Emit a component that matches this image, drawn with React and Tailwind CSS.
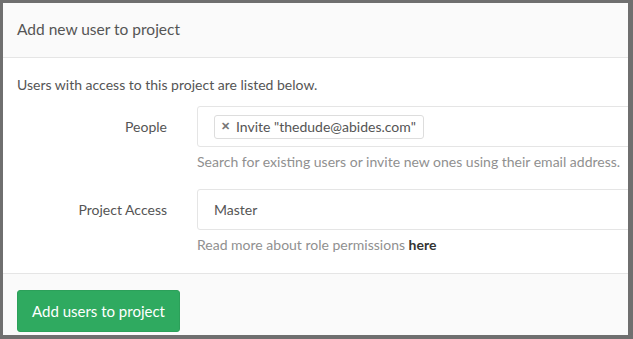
export default function App() {
  return (
    <div
      className="w-[633px] h-[339px] overflow-hidden bg-white border-[#6f6f6f] border-t-[3px] border-l-[3px] border-r-[5px] border-b-[4px] text-[14px] text-[#5c5c5c]"
      style={{ fontFamily: '"Source Sans Pro", Lato, "Liberation Sans", sans-serif' }}
    >
      <div className="h-[55px] px-[14px] flex items-center bg-[#fafafa] border-b border-[#e5e5e5]">
        <h3 className="text-[15.5px] text-[#555]">Add new user to project</h3>
      </div>

      <div className="pt-[17px] pb-[18px] pl-[14px]">
        <p className="leading-[20px] text-[#555]">
          Users with access to this project are listed below.
        </p>

        <div className="mt-[11px] flex">
          <label className="w-[150px] shrink-0 text-right leading-[41px] text-[#555]">
            People
          </label>
          <div className="ml-[30px] w-[500px] shrink-0">
            <div className="h-[41px] border border-[#e5e5e5] rounded-[3px] flex items-center px-[16px]">
              <span className="h-[24px] flex items-center gap-[6px] border border-[#dddddd] rounded-[3px] pl-[6px] pr-[7px] text-[#555]">
                <span className="text-[11px] text-[#777] font-bold">✕</span>
                Invite "thedude@abides.com"
              </span>
            </div>
            <p className="mt-[5px] leading-[20px] text-[#909090]">
              Search for existing users or invite new ones using their email address.
            </p>
          </div>
        </div>

        <div className="mt-[17px] flex">
          <label className="w-[150px] shrink-0 text-right leading-[41px] text-[#555]">
            Project Access
          </label>
          <div className="ml-[30px] w-[500px] shrink-0">
            <div className="h-[41px] border border-[#e5e5e5] rounded-[3px] flex items-center px-[16px] text-[#555]">
              Master
            </div>
            <p className="mt-[5px] leading-[20px] text-[#909090]">
              Read more about role permissions{" "}
              <a className="font-bold text-[#333]">here</a>
            </p>
          </div>
        </div>
      </div>

      <div className="bg-[#fafafa] border-t border-[#e5e5e5] pt-[16px] px-[14px] h-[80px]">
        <button className="h-[42px] w-[163px] rounded-[3px] bg-[#2faa60] border border-[#2ca05a] text-white text-[15px]">
          Add users to project
        </button>
      </div>
    </div>
  );
}
